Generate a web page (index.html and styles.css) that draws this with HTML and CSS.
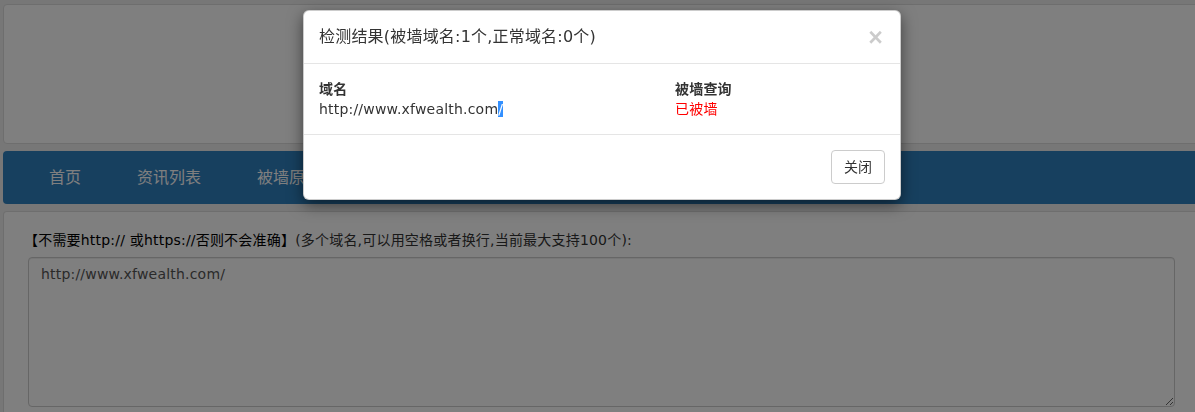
FILE: index.html
```html
<!DOCTYPE html>
<html lang="zh-CN">
<head>
<meta charset="utf-8">
<title>域名被墙检测</title>
<link rel="stylesheet" href="styles.css">
</head>
<body>
<div class="page">
  <div class="top-panel"></div>
  <nav class="nav">
    <a class="nav-item">首页</a>
    <a class="nav-item">资讯列表</a>
    <a class="nav-item">被墙原因</a>
  </nav>
  <div class="content-panel">
    <div class="label"><span class="label-strong">【不需要http:// 或https://否则不会准确】</span>(多个域名,可以用空格或者换行,当前最大支持100个):</div>
    <textarea class="domains">http://www.xfwealth.com/</textarea>
  </div>
</div>

<div class="backdrop"></div>
<div class="modal">
  <div class="modal-header">
    <span class="close">×</span>
    <h4 class="modal-title">检测结果(被墙域名:1个,正常域名:0个)</h4>
  </div>
  <div class="modal-body">
    <div class="result-grid">
      <div class="th">域名</div>
      <div class="th">被墙查询</div>
      <div class="td">http://www.xfwealth.com<span class="sel">/</span></div>
      <div class="td blocked">已被墙</div>
    </div>
  </div>
  <div class="modal-footer">
    <button class="btn">关闭</button>
  </div>
</div>
</body>
</html>
```

FILE: styles.css
```css
html, body {
  margin: 0;
  padding: 0;
}
body {
  background: #eeeeee;
  overflow: hidden;
  font-family: "DejaVu Sans", "Noto Sans CJK SC", sans-serif;
  font-size: 14px;
  line-height: 20px;
  letter-spacing: 0.2px;
  color: #333;
}
.page {
  width: 1197px;
  margin-left: 3px;
  padding-top: 4px;
}
.top-panel {
  height: 138px;
  background: #fff;
  border: 1px solid #dddddd;
  border-radius: 4px;
}
.nav {
  margin-top: 7px;
  height: 53px;
  background: #2e80bf;
  border-radius: 4px;
  display: flex;
  padding-left: 18px;
}
.nav-item {
  padding: 0 28px;
  line-height: 53px;
  font-size: 16px;
  letter-spacing: 0;
  color: #ffffff;
}
.content-panel {
  margin-top: 7px;
  background: #fff;
  border: 1px solid #dddddd;
  border-bottom: none;
  border-radius: 4px 4px 0 0;
  padding: 18px 0 0 20px;
  height: 200px;
}
.label {
  margin-bottom: 7px;
  color: #333;
}
.label-strong {
  color: #000;
}
.domains {
  display: block;
  margin-left: 4px;
  box-sizing: border-box;
  width: 1147px;
  height: 150px;
  border: 1px solid #cccccc;
  border-radius: 4px;
  padding: 6px 12px;
  font-family: "DejaVu Sans", "Noto Sans CJK SC", sans-serif;
  font-size: 14px;
  line-height: 20px;
  letter-spacing: 0.2px;
  color: #555;
  background: #fff;
  box-shadow: inset 0 1px 1px rgba(0,0,0,.075);
}
.backdrop {
  position: fixed;
  inset: 0;
  background: rgba(0,0,0,.5);
}
.modal {
  position: fixed;
  top: 10px;
  left: 303px;
  width: 598px;
  box-sizing: border-box;
  background: #fff;
  border: 1px solid rgba(0,0,0,.2);
  border-radius: 6px;
  box-shadow: 0 5px 15px rgba(0,0,0,.5);
}
.modal-header {
  padding: 15px;
  border-bottom: 1px solid #e5e5e5;
}
.modal-title {
  margin: 0;
  font-size: 16px;
  line-height: 22px;
  font-weight: normal;
  color: #333;
}
.close {
  float: right;
  font-size: 25px;
  font-weight: bold;
  line-height: 22px;
  color: #000;
  opacity: .2;
  margin-right: 2px;
  font-family: "Liberation Sans", sans-serif;
}
.modal-body {
  padding: 15px;
}
.result-grid {
  display: grid;
  grid-template-columns: 356px 1fr;
}
.th {
  font-weight: bold;
  color: #333;
}
.td {
  color: #333;
}
.sel {
  background: #3390ff;
  color: #fff;
}
.blocked {
  color: #ff0000;
}
.modal-footer {
  padding: 15px;
  border-top: 1px solid #e5e5e5;
  display: flex;
  justify-content: flex-end;
}
.btn {
  font-family: "DejaVu Sans", "Noto Sans CJK SC", sans-serif;
  font-size: 14px;
  line-height: 20px;
  padding: 6px 12px;
  border: 1px solid #cccccc;
  border-radius: 4px;
  background: #fff;
  color: #333;
}
```
